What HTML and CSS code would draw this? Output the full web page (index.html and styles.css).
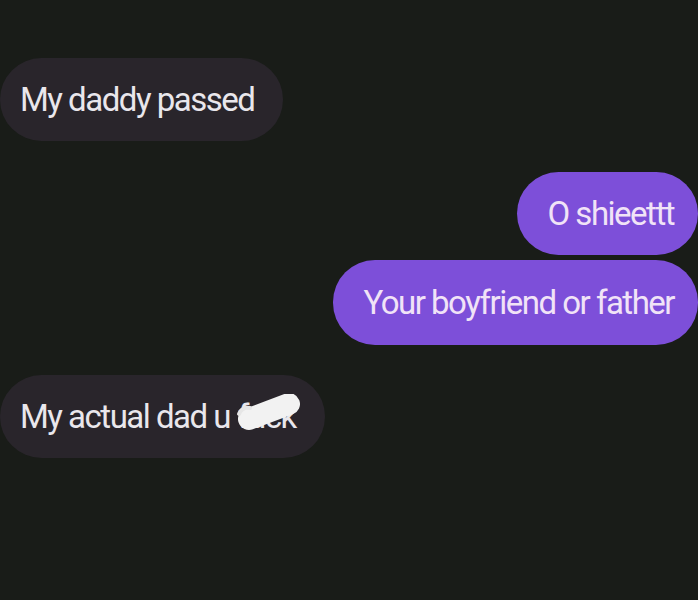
FILE: index.html
```html
<!DOCTYPE html>
<html lang="en">
<head>
    <meta charset="UTF-8">
    <meta name="viewport" content="width=device-width, initial-scale=1.0">
    <title>Chat</title>
    <link rel="stylesheet" href="styles.css">
</head>
<body>
    <div class="chat">
        <div class="msg in first">My daddy passed</div>

        <div class="msg out second">O shieettt</div>
        <div class="msg out third">Your boyfriend or father</div>

        <div class="msg in fourth">My actual dad u <span class="censor">fuck<svg class="scribble" viewBox="0 0 70 46" width="70" height="46">
            <path d="M15 25 C 28 20, 42 15, 55 10" stroke="#f2f2f2" stroke-width="22" stroke-linecap="round" fill="none"/>
            <path d="M5 20 C 7 15, 11 13, 16 14" stroke="#e6e6e6" stroke-width="4" stroke-linecap="round" fill="none"/>
        </svg></span></div>
    </div>
</body>
</html>
```

FILE: styles.css
```css
body {
    margin: 0;
    background-color: #191c18;
    font-family: Roboto, "Noto Sans", sans-serif;
    height: 600px;
    overflow: hidden;
}
.chat {
    display: flex;
    flex-direction: column;
    padding-top: 58px;
}
.msg {
    box-sizing: border-box;
    height: 83px;
    display: flex;
    align-items: center;
    font-size: 33px;
    letter-spacing: -1.5px;
    border-radius: 42px;
    white-space: nowrap;
}
.msg.in {
    align-self: flex-start;
    background-color: #29252b;
    color: #e9e7ec;
    padding: 0 29px 0 20px;
}
.msg.out {
    align-self: flex-end;
    background-color: #7d4fd9;
    color: #f1e3f7;
    padding: 0 24px 0 30px;
}
.second {
    margin-top: 31px;
}
.third {
    margin-top: 5px;
    height: 85px;
}
.fourth {
    margin-top: 30px;
}
.censor {
    position: relative;
    margin-left: 8px;
}
.scribble {
    position: absolute;
    left: -4px;
    top: -3px;
}
```
